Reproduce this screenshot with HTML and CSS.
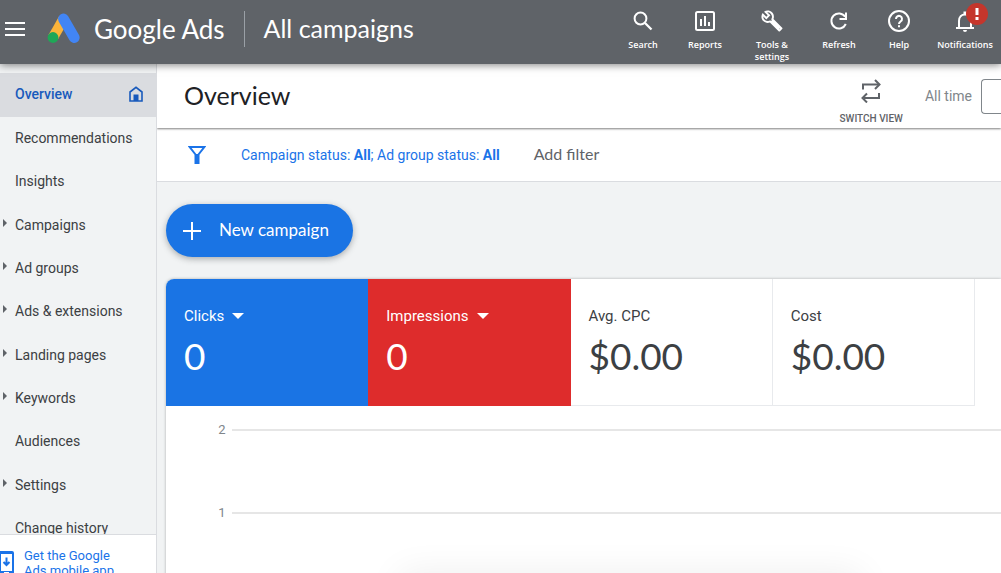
FILE: index.html
```
<!DOCTYPE html>
<html lang="en">
<head>
<meta charset="utf-8">
<title>Overview - Google Ads</title>
<link rel="stylesheet" href="styles.css">
</head>
<body>
<div class="app">
  <header class="topbar">
    <button class="menu-button" aria-label="Main menu">
      <svg width="20" height="14" viewBox="0 0 20 14"><path d="M0 1h20M0 7h20M0 13h20" stroke="#fff" stroke-width="2"/></svg>
    </button>
    <a class="brand" href="#">
      <svg class="brand-logo" width="34" height="32" viewBox="0 0 34 32">
        <path d="M16.500 6L6 24.500" stroke="#fbb43a" stroke-width="10.500"/>
        <path d="M16.500 6L27.200 24.500" stroke="#4285f4" stroke-width="10.800" stroke-linecap="round"/>
        <circle cx="6" cy="24.500" r="5.400" fill="#1fa757"/>
      </svg>
      <span class="brand-name">Google Ads</span>
    </a>
    <h2 class="scope">All campaigns</h2>
    <div class="tools">
      <button class="tool tool-search"><svg width="24" height="24" viewBox="0 0 24 24"><circle cx="9.500" cy="9.500" r="5.900" fill="none" stroke="#fff" stroke-width="2"/><path d="M14 14l6.500 6.500" stroke="#fff" stroke-width="2.300"/></svg>Search</button>
      <button class="tool"><svg width="24" height="24" viewBox="0 0 24 24"><rect x="3" y="3" width="18" height="18" rx="1.500" fill="none" stroke="#fff" stroke-width="2"/><path d="M8 17v-7M12 17V7M16 17v-4" stroke="#fff" stroke-width="2"/></svg>Reports</button>
      <button class="tool tool-wide"><svg width="24" height="24" viewBox="-0.500 -0.500 25 25"><path d="M22.610 18.990l-9.080-9.080c.93-2.340.45-5.100-1.440-7C9.790.61 6.210.4 3.660 2.260L7.500 6.110 6.080 7.520 2.250 3.690C.39 6.230.6 9.820 2.900 12.110c1.860 1.860 4.570 2.350 6.890 1.480l9.110 9.110c.39.39 1.020.39 1.410 0l2.300-2.300c.4-.38.4-1.010 0-1.410zm-3 1.600l-9.460-9.460c-.61.45-1.290.72-2 .82-1.360.2-2.790-.21-3.830-1.250C3.370 9.760 2.930 8.500 3 7.260l3.090 3.090 4.240-4.240-3.090-3.090c1.240-.07 2.490.37 3.440 1.310 1.080 1.080 1.490 2.570 1.240 3.960-.12.710-.42 1.370-.88 1.960l9.450 9.450-.88.890z" fill="#fff"/><path d="M11.500 11.500l8.500 8.500" stroke="#fff" stroke-width="3.500"/></svg>Tools &amp; settings</button>
      <button class="tool"><svg width="24" height="24" viewBox="0 0 24 24"><path d="M18.800 15a7.500 7.500 0 1 1-.6-7.200" fill="none" stroke="#fff" stroke-width="2"/><path d="M19 3.500V10h-6.500" fill="none" stroke="#fff" stroke-width="2"/></svg>Refresh</button>
      <button class="tool"><svg width="24" height="24" viewBox="0 0 24 24"><circle cx="12" cy="12" r="10" fill="none" stroke="#fff" stroke-width="2"/><path d="M9 10a3 3 0 1 1 4.800 2.300c-1 .8-1.800 1.300-1.800 2.700" fill="none" stroke="#fff" stroke-width="2"/><path d="M11 16.300h2v2h-2z" fill="#fff"/></svg>Help</button>
      <button class="tool tool-alert"><svg width="24" height="24" viewBox="0 0 24 24"><path d="M3 19h18M6 19v-7c0-4 2.500-6.500 6-6.500s6 2.500 6 6.500v7" fill="none" stroke="#fff" stroke-width="2"/><path d="M10.500 2.500h3V6h-3zM10 21h4a2 2 0 0 1-4 0z" fill="#fff"/></svg>Notifications<span class="badge"><svg width="4" height="12" viewBox="0 0 4 12"><path d="M.5 0h3v7h-3zM.5 9h3v3h-3z" fill="#fff"/></svg></span></button>
    </div>
  </header>

  <div class="body">
    <aside class="sidebar">
      <nav class="nav">
        <div class="nav-group">
          <a class="nav-item active" href="#">Overview
            <svg width="14" height="16" viewBox="0 0 14 16"><path d="M1 6l6-4.700L13 6v9H1z" fill="none" stroke="#185abc" stroke-width="1.600"/><path d="M4.500 8.500h5V15h-5z" fill="#185abc"/></svg>
          </a>
          <a class="nav-item" href="#">Recommendations</a>
          <a class="nav-item" href="#">Insights</a>
        </div>
        <div class="nav-group">
          <a class="nav-item expandable" href="#">Campaigns</a>
          <a class="nav-item expandable" href="#">Ad groups</a>
          <a class="nav-item expandable" href="#">Ads &amp; extensions</a>
        </div>
        <div class="nav-group">
          <a class="nav-item expandable" href="#">Landing pages</a>
          <a class="nav-item expandable" href="#">Keywords</a>
          <a class="nav-item" href="#">Audiences</a>
        </div>
        <div class="nav-group">
          <a class="nav-item expandable" href="#">Settings</a>
          <a class="nav-item" href="#">Change history</a>
        </div>
      </nav>
      <a class="app-promo" href="#">
        <svg width="14" height="24" viewBox="0 0 14 24"><path fill-rule="evenodd" d="M0 0h12a2 2 0 0 1 2 2v20a2 2 0 0 1-2 2H0zM1 3h11v17H1z" fill="#1a73e8"/><path d="M6.500 6.500v7M3.500 11l3 3 3-3" fill="none" stroke="#1a73e8" stroke-width="2"/><path d="M4 21.500h5" stroke="#fff"/></svg>
        <span>Get the Google Ads mobile app</span>
      </a>
    </aside>

    <main class="main">
      <section class="page-head">
        <h1 class="page-title">Overview</h1>
        <button class="switch-view">
          <svg width="20" height="24" viewBox="0 0 20 24"><path d="M2 10.500V5.500h15M18 14v5H3" fill="none" stroke="#5f6368" stroke-width="2"/><path d="M14 1l4.500 4.500L14 10M6 14.500L1.500 19 6 23.500" fill="none" stroke="#5f6368" stroke-width="2"/></svg>
          SWITCH VIEW
        </button>
        <span class="range-label">All time</span>
        <button class="range-picker" aria-label="Date range"></button>
      </section>

      <section class="filters">
        <svg class="funnel" width="18" height="18" viewBox="0 0 18 18"><path d="M1.700 1h14.600L10.500 8.500V17h-3V8.500z" fill="none" stroke="#1a73e8" stroke-width="2"/><path d="M7 8h4v9H7z" fill="#1a73e8"/></svg>
        <button class="filter-text">Campaign status: <b>All</b>; Ad group status: <b>All</b></button>
        <button class="add-filter">Add filter</button>
      </section>

      <div class="content">
        <button class="new-campaign">
          <svg width="18" height="18" viewBox="0 0 18 18"><path d="M0 9h18M9 0v18" stroke="#fff" stroke-width="2"/></svg>
          <span class="new-label">New campaign</span>
        </button>

        <section class="card">
          <div class="metrics">
            <button class="metric blue"><span class="metric-name">Clicks <i class="caret"></i></span><span class="metric-value">0</span></button>
            <button class="metric red"><span class="metric-name">Impressions <i class="caret"></i></span><span class="metric-value">0</span></button>
            <button class="metric"><span class="metric-name">Avg. CPC</span><span class="metric-value">$0.00</span></button>
            <button class="metric"><span class="metric-name">Cost</span><span class="metric-value">$0.00</span></button>
          </div>
          <div class="chart">
            <div class="tick"><span class="tick-label">2</span><span class="tick-line"></span></div>
            <div class="tick"><span class="tick-label">1</span><span class="tick-line"></span></div>
          </div>
        </section>
      </div>
    </main>
  </div>
  <div class="toast-shadow"></div>
</div>
</body>
</html>
```
FILE: styles.css
```
* { box-sizing: border-box; }
body { margin: 0; font-family: Roboto, "Liberation Sans", sans-serif; color: #3c4043; }
button { font: inherit; color: inherit; background: none; border: 0; padding: 0; margin: 0; cursor: pointer; }
a { color: inherit; text-decoration: none; }
h1, h2 { margin: 0; font-weight: 400; }
svg { display: block; flex: none; }

.app { position: relative; height: 100vh; display: flex; flex-direction: column; overflow: hidden; background: #f1f3f4; }

.topbar { position: relative; z-index: 2; flex: none; height: 64px; display: flex; align-items: center; padding-left: 5px; background: #5f6368; color: #fff; box-shadow: 0 1px 8px rgba(0, 0, 0, .5); }
.menu-button { margin-bottom: 6px; }
.brand { display: flex; align-items: center; height: 36px; margin: 0 19px 6px 22px; gap: 13px; }
.brand-name, .scope { font-family: Lato, "Open Sans", sans-serif; line-height: 34px; white-space: nowrap; }
.brand-name { font-size: 26px; }
.scope { font-size: 25px; border-left: 1px solid #9aa0a6; padding: 0 0 2px 19px; margin-bottom: 6px; }

.tools { display: flex; align-self: stretch; margin-left: auto; }
.tool { position: relative; display: flex; flex-direction: column; align-items: center; width: 60px; padding: 9px 8px 0; gap: 6px; font-family: "Open Sans", sans-serif; font-size: 9px; line-height: 12px; font-weight: 600; justify-content: flex-start; }
.tool-search { width: 64px; }
.tool-wide { width: 74px; padding-left: 16px; padding-right: 16px; }
.tool-alert { width: 72px; padding-left: 0; padding-right: 0; }
.badge { position: absolute; top: 3px; left: 37px; width: 22px; height: 22px; border-radius: 50%; background: #c5362c; display: flex; align-items: center; justify-content: center; }

.body { flex: 1; min-height: 0; display: flex; }
.sidebar { flex: none; width: 157px; display: flex; flex-direction: column; border-right: 1px solid #dadce0; }
.nav { flex: 1; min-height: 0; overflow: hidden; padding-top: 9px; display: flex; flex-direction: column; gap: 1px; }
.nav-item { position: relative; display: flex; align-items: center; justify-content: space-between; height: 43px; padding: 0 13px 2px 15px; font-size: 14px; white-space: nowrap; }
.nav-item.active { height: 44px; background: #dadce0; color: #185abc; font-weight: 500; }
.expandable::before { content: ""; position: absolute; left: 3px; top: 15px; border: 4px solid transparent; border-left-color: #5f6368; border-right: 0; }
.app-promo { flex: none; height: 39px; overflow: hidden; display: flex; gap: 10px; padding: 13px 32px 0 0; border-top: 1px solid #dadce0; background: #fff; color: #1a73e8; font-size: 13px; line-height: 15px; }
.app-promo svg { margin-top: 3px; }

.main { flex: 1; min-width: 0; overflow: hidden; }
.page-head { position: relative; z-index: 1; height: 64px; display: flex; align-items: center; padding-left: 27px; background: #fff; box-shadow: 0 1px 2px rgba(0, 0, 0, .5); }
.page-title { font-family: Lato, "Open Sans", sans-serif; font-size: 25px; line-height: 32px; padding-bottom: 2px; color: #202124; }
.switch-view { margin-left: auto; align-self: flex-end; display: flex; flex-direction: column; align-items: center; gap: 9px; padding-bottom: 2px; font-size: 10px; line-height: 14px; font-weight: 500; color: #5f6368; }
.range-label { margin: 0 9px 0 22px; font-size: 14px; color: #80868b; }
.range-picker { width: 20px; height: 35px; border: 1px solid #80868b; border-right: 0; border-radius: 4px 0 0 4px; }

.filters { height: 54px; display: flex; align-items: center; padding-left: 31px; background: #fff; border-bottom: 1px solid #dadce0; }
.filter-text { margin-left: 35px; font-size: 14px; color: #1a73e8; }
.add-filter { margin-left: 34px; padding-bottom: 2px; font-family: Lato, "Open Sans", sans-serif; font-size: 16px; color: #5f6368; }

.content { padding: 22px 0 0 9px; }
.new-campaign { display: flex; align-items: center; gap: 18px; height: 53px; padding: 0 24px 0 17px; border-radius: 27px; background: #1a74e4; color: #fff; font-family: Lato, "Open Sans", sans-serif; font-size: 17px; box-shadow: 0 2px 6px rgba(60, 64, 67, .4); }
.new-label { padding-bottom: 2px; }

.card { margin-top: 22px; min-height: 400px; background: #fff; border-radius: 8px 0 0 0; box-shadow: 0 0 3px rgba(60, 64, 67, .4); }
.metrics { display: grid; grid-template-columns: repeat(4, 1fr); max-width: 809px; }
.metric { height: 127px; padding: 28px 18px 0; display: flex; flex-direction: column; align-items: flex-start; gap: 11px; border-right: 1px solid #e8eaed; border-bottom: 1px solid #e8eaed; justify-content: flex-start; text-align: left; }
.metric-name { display: flex; align-items: center; gap: 8px; font-size: 15px; line-height: 18px; white-space: nowrap; }
.metric-value { font-family: Lato, "Open Sans", sans-serif; font-size: 37px; line-height: 40px; }
.caret { border: 6px solid transparent; border-top-color: currentColor; border-bottom: 0; }
.blue { background: #1a74e4; border-color: #1a74e4; color: #fff; border-top-left-radius: 8px; }
.red { background: #de2c2c; border-color: #de2c2c; color: #fff; }

.chart { padding: 16px 0 0 51px; display: flex; flex-direction: column; gap: 67px; }
.tick { display: flex; align-items: center; height: 16px; gap: 5px; }
.tick-label { width: 10px; text-align: center; font-size: 13px; line-height: 16px; color: #80868b; }
.tick-line { flex: 1; height: 2px; background: #e6e6e6; }

.toast-shadow { position: absolute; top: 100%; left: 40%; width: 46%; height: 40px; box-shadow: 0 0 36px rgba(0, 0, 0, .07); }
```
